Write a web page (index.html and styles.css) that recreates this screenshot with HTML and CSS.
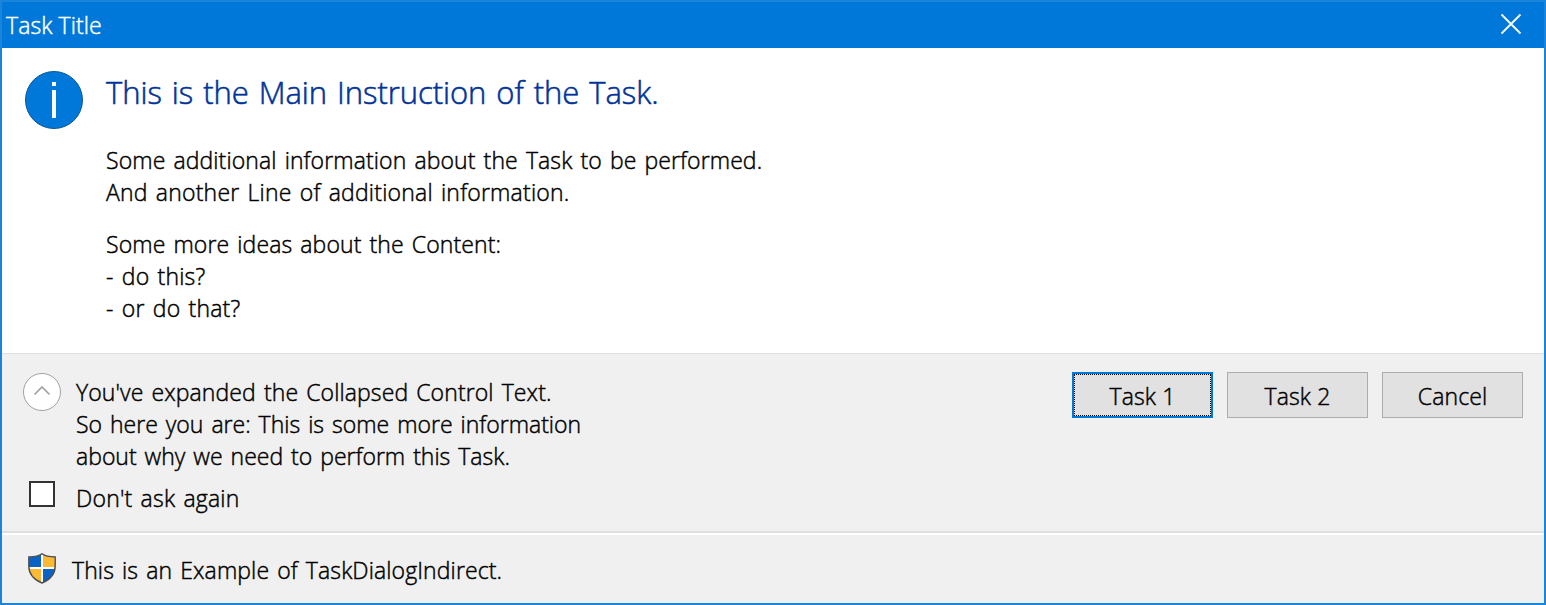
FILE: index.html
```html
<!DOCTYPE html>
<html lang="en">
<head>
<meta charset="utf-8">
<title>Task Title</title>
<link rel="stylesheet" href="styles.css">
</head>
<body>
<div class="dialog">
  <header class="titlebar">
    <span class="title">Task Title</span>
    <svg class="close" width="22" height="22" viewBox="0 0 22 22"><path d="M1.5 1.5 20.5 20.5M20.5 1.5 1.5 20.5"/></svg>
  </header>
  <main class="content">
    <svg class="info" width="58" height="58" viewBox="0 0 58 58"><circle cx="29" cy="29" r="28.5"/><path d="M27 11h4v4h-4zM27 19h4v28h-4z"/></svg>
    <div class="message">
      <h1 class="instruction">This is the Main Instruction of the Task.</h1>
      <div class="para">
        <div class="line">Some additional information about the Task to be performed.</div>
        <div class="line loose">And another Line of additional information.</div>
      </div>
      <div class="para">
        <div class="line">Some more ideas about the Content:</div>
        <div class="line loose">- do this?</div>
        <div class="line loose">- or do that?</div>
      </div>
    </div>
  </main>
  <section class="controls">
    <div class="options">
      <div class="expander">
        <svg class="chevron" width="38" height="38" viewBox="0 0 38 38"><circle cx="19" cy="19" r="18.5"/><path d="M11.5 21.5 19 14l7.500 7.500"/></svg>
        <div class="expanded">
          <div class="line">You've expanded the Collapsed Control Text.</div>
          <div class="line tight">So here you are: This is some more information</div>
          <div class="line tight">about why we need to perform this Task.</div>
        </div>
      </div>
      <label class="verify"><span class="box"></span><span class="line loose">Don't ask again</span></label>
    </div>
    <div class="buttons">
      <button class="btn default"><span>Task 1</span></button>
      <button class="btn"><span>Task 2</span></button>
      <button class="btn"><span>Cancel</span></button>
    </div>
  </section>
  <footer class="footer">
    <svg class="shield" width="28" height="31" viewBox="0 0 28 31">
      <defs>
        <clipPath id="shape"><path d="M14 1C11 3.200 6.500 4 1 4.200V13C1 21 6 26.500 14 29.800C22 26.500 27 21 27 13V4.200C21.500 4 17 3.200 14 1Z"/></clipPath>
      </defs>
      <g clip-path="url(#shape)">
        <path fill="#0a63c4" d="M0 0h14v15H0zM14 15h14v16H14z"/>
        <path fill="#fdb834" d="M14 0h14v15H14zM0 15h14v16H0z"/>
        <path fill="#fff" d="M13 0h2v31h-2zM0 14h28v2H0z"/>
      </g>
      <path fill="none" stroke="#4c4f52" stroke-width="1.400" d="M14 .8C11 3 6.500 3.900 .8 4V13C.8 21 6 26.700 14 30C22 26.700 27.200 21 27.200 13V4C21.500 3.900 17 3 14 .8Z"/>
    </svg>
    <span class="line">This is an Example of TaskDialogIndirect.</span>
  </footer>
</div>
</body>
</html>
```
FILE: styles.css
```css
* { box-sizing: border-box; }
body {
  margin: 0;
  font-family: "Open Sans", "Noto Sans", sans-serif;
  font-size: 23px;
  font-weight: 300;
  line-height: 32px;
  letter-spacing: .1px;
  -webkit-text-stroke: .45px currentColor;
  color: #000;
}
.dialog {
  width: 1546px;
  height: 605px;
  display: flex;
  flex-direction: column;
  border: 2px solid #1a83da;
  background: #fff;
}
.line { white-space: nowrap; word-spacing: 2px; }
.loose { letter-spacing: .2px; }
.tight { letter-spacing: 0; }
.titlebar {
  height: 46px;
  flex: none;
  display: flex;
  justify-content: space-between;
  padding: 7px 22px 0 4px;
  background: #0078d9;
  color: #fff;
}
.close { margin-top: 4px; stroke: #fff; stroke-width: 1.8; fill: none; }
.content {
  height: 305px;
  flex: none;
  display: flex;
  gap: 23px;
  padding: 23px 0 0 23px;
}
.info circle { fill: #0078d9; stroke: #0a5796; stroke-width: 1; }
.info path { fill: #fff; }
.instruction {
  margin: 0;
  padding-bottom: 30px;
  font-size: 31px;
  font-weight: 300;
  line-height: 43px;
  letter-spacing: -.05px;
  color: #003399;
  white-space: nowrap;
  word-spacing: 2px;
  -webkit-text-stroke-width: .55px;
}
.para + .para { margin-top: 20px; }
.controls {
  height: 180px;
  flex: none;
  display: flex;
  justify-content: space-between;
  padding: 18px 21px 0;
  border-top: 1px solid #dfdfdf;
  border-bottom: 2px solid #dfdfdf;
  background: #f0f0f0;
}
.expander { display: flex; gap: 15px; padding-top: 1px; }
.expanded { padding-top: 3px; }
.chevron circle { fill: #fff; stroke: #a0a0a0; }
.chevron path { fill: none; stroke: #a0a0a0; stroke-width: 1.6; }
.verify { display: flex; gap: 21px; padding: 10px 0 0 6px; }
.box {
  width: 26px;
  height: 26px;
  margin-top: -1px;
  border: 2px solid #333;
  background: #fff;
}
.buttons { display: flex; gap: 14px; }
.btn {
  width: 141px;
  height: 46px;
  padding: 2px 0 0;
  border: 1px solid #adadad;
  border-radius: 0;
  background: #e1e1e1;
  font: inherit;
  letter-spacing: inherit;
  color: inherit;
}
.default {
  border: 2px solid #0078d7;
  outline: 1px dotted #000;
  outline-offset: -3px;
}
.footer {
  flex: 1;
  display: flex;
  gap: 16px;
  padding: 19px 0 0 26px;
  border-top: 2px solid #fff;
  background: #f0f0f0;
}
.shield { margin-top: -1px; }
```
